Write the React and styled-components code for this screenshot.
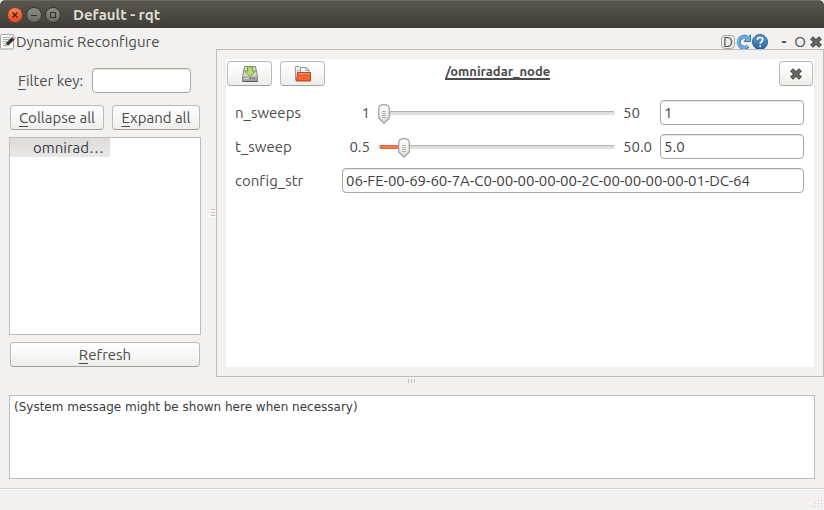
import React, { useState } from "react";
import styled, { createGlobalStyle } from "styled-components";

const GlobalStyle = createGlobalStyle`
  * { box-sizing: border-box; }
  body { margin: 0; background: #f2f1f0; }
  button, input, textarea { font: inherit; color: inherit; }
`;

const uiFont = `"Ubuntu", "Noto Sans", sans-serif`;

const thumb = `url("data:image/svg+xml,%3Csvg xmlns='http://www.w3.org/2000/svg' width='12' height='20'%3E%3Cdefs%3E%3ClinearGradient id='g' x2='0' y2='1'%3E%3Cstop stop-color='%23fff'/%3E%3Cstop offset='1' stop-color='%23dddcda'/%3E%3C/linearGradient%3E%3C/defs%3E%3Cpath d='M.7 5Q.7 .7 6 .7T11.3 5V14L6 19.2L.7 14Z' fill='url(%23g)' stroke='%23a09e9b' stroke-width='1.2'/%3E%3Cpath d='M4 7.5h4M4 9.5h4M4 11.5h4M4 13.5h4' stroke='%23b5b3b0'/%3E%3C/svg%3E")`;

const Window = styled.div`
  min-height: 100vh;
  display: flex;
  flex-direction: column;
  background: #f2f1f0;
  color: #4c4c4c;
  font: 15px/20px ${uiFont};
`;

const TitleBar = styled.header`
  height: 28px;
  flex: none;
  display: flex;
  align-items: center;
  gap: 3px;
  padding: 0 7px;
  border-radius: 5px 5px 0 0;
  border-top: 1px solid #6a675f;
  background: linear-gradient(#59564e, #3e3d38);
`;

const WindowTitle = styled.h1`
  margin: 0 0 0 9px;
  font: bold 15px/20px ${uiFont};
  color: #dfdbd2;
`;

const WindowButton = styled.button`
  width: 16px;
  height: 16px;
  padding: 0;
  border: 1px solid ${(p) => (p.$close ? "#8c3a20" : "#3a3934")};
  border-radius: 50%;
  background: ${(p) =>
    p.$close ? "linear-gradient(#f58360, #e6491b)" : "linear-gradient(#8f8c83, #6d6a62)"};
  svg { display: block; }
`;

const DockHeader = styled.div`
  height: 21px;
  flex: none;
  display: flex;
  align-items: center;
  padding-top: 6px;
`;

const DockTitle = styled.h2`
  margin: 0 auto 0 0;
  display: flex;
  align-items: center;
  font: 15px/20px ${uiFont};
  svg { flex: none; }
`;

const DockTools = styled.div`
  display: flex;
  align-items: center;
  margin-left: 8px;
`;

const DockButton = styled.button`
  height: 16px;
  width: 16px;
  padding: 0;
  border: 0;
  background: none;
  line-height: 16px;
  text-align: center;
  font-weight: ${(p) => (p.$strong ? 700 : 400)};
  svg { display: block; margin: 0 auto; }
`;

const OptionsButton = styled(DockButton)`
  height: 14px;
  width: 14px;
  margin-right: 1px;
  border: 1px solid #aaa7a3;
  border-radius: 4px;
  background: #eeeceb;
  font-size: 14px;
  line-height: 12px;
`;

const Workspace = styled.main`
  flex: 1;
  display: flex;
`;

const Sidebar = styled.aside`
  width: 210px;
  flex: none;
  display: flex;
  flex-direction: column;
  padding: 19px 9px 10px;
`;

const FilterRow = styled.div`
  display: flex;
  align-items: center;
  justify-content: space-between;
  padding: 0 10px 0 9px;
`;

const TextField = styled.input`
  display: block;
  width: 100%;
  min-width: 0;
  height: 25px;
  padding: 0 3px;
  border: 1px solid #a9a5a1;
  border-radius: 4px;
  background: #fff;
  color: #3c3c3c;
  outline: none;
  box-shadow: inset 0 1px 0 #e8e7e5;
`;

const FilterField = styled(TextField)`
  width: 99px;
`;

const ButtonRow = styled.div`
  display: flex;
  gap: 8px;
  margin: 12px 0 7px;
  padding: 0 1px;
`;

const PushButton = styled.button`
  height: 25px;
  flex: ${(p) => (p.$width ? "none" : "1")};
  width: ${(p) => (p.$width ? `${p.$width}px` : "auto")};
  padding: 0;
  display: flex;
  align-items: center;
  justify-content: center;
  border: 1px solid #bdbab7;
  border-bottom-color: #a3a09c;
  border-radius: 4px;
  background: linear-gradient(#fff, #f7f7f6 50%, #ededec);
  white-space: nowrap;
`;

const Mnemonic = styled.u`
  text-underline-offset: 3px;
  text-decoration-thickness: 1px;
  text-decoration-skip-ink: none;
`;

const NodeTree = styled.ul`
  flex: 1;
  min-height: 80px;
  margin: 0 0 7px;
  padding: 0;
  list-style: none;
  border: 1px solid #c0bdb9;
  background: #fff;
`;

const TreeItem = styled.li`
  width: 100px;
  height: 19px;
  padding-left: 23px;
  line-height: 19px;
  color: #3c3c3c;
  background: linear-gradient(#dcdbd9, #e9e8e7);
`;

const RefreshRow = styled.div`
  display: flex;
  padding: 0 1px;
`;

const Handle = styled.div`
  flex: none;
  display: flex;
  align-items: center;
  justify-content: center;
  ${(p) => (p.$vertical ? "width: 6px;" : "height: 8px;")}
`;

const ScrollFrame = styled.section`
  flex: 1;
  min-width: 0;
  display: flex;
  padding: 9px;
  border: 1px solid #c0bdb9;
`;

const NodePanel = styled.div`
  flex: 1;
  min-width: 0;
  padding: 2px 1px 20px;
  background: #fff;
`;

const NodeToolbar = styled.div`
  display: flex;
  align-items: center;
`;

const ToolGroup = styled.div`
  display: flex;
  gap: 8px;
`;

const Space = styled.span`
  flex: ${(p) => p.$grow};
`;

const NodeName = styled.h3`
  margin: 0 0 2px;
  font: bold 13px/13px ${uiFont};
  border-bottom: 2px solid #4c4c4c;
`;

const ParameterList = styled.div`
  display: flex;
  flex-direction: column;
  gap: 9px;
  padding: 14px 9px 0 8px;
`;

const ParameterRow = styled.div`
  display: flex;
  align-items: center;
`;

const Name = styled.label`
  width: 107px;
  flex: none;
  font-variant-ligatures: none;
`;

const Limit = styled.span`
  flex: none;
  width: ${(p) => (p.$lower ? 28 : 29)}px;
  display: flex;
  justify-content: ${(p) => (p.$lower ? "flex-end" : "flex-start")};
`;

const ValueBox = styled.div`
  flex: none;
  width: 144px;
  margin-left: 8px;
`;

const Slider = styled.input`
  flex: 1;
  min-width: 60px;
  height: 20px;
  margin: 0 8px;
  appearance: none;
  background: none;
  outline: none;

  &::-webkit-slider-runnable-track {
    height: 4px;
    border-radius: 2px;
    background:
      linear-gradient(#d9542a, #f47c50 1px, #f47c50 3px, #d9542a) 2px 0 / var(--fill) 4px no-repeat,
      linear-gradient(#b5b3b0 1px, #e0dfdd 1px);
  }
  &::-webkit-slider-thumb {
    appearance: none;
    width: 12px;
    height: 20px;
    margin-top: -7px;
    background: ${thumb} no-repeat;
  }
`;

const MessageArea = styled.textarea`
  display: block;
  height: 84px;
  flex: none;
  margin: 10px 9px 9px;
  padding: 4px;
  resize: none;
  outline: none;
  border: 1px solid #c0bdb9;
  background: #fff;
  color: #3c3c3c;
  font: 12px/14px "DejaVu Sans", sans-serif;
`;

const StatusBar = styled.footer`
  height: 22px;
  flex: none;
  display: flex;
  align-items: flex-end;
  justify-content: flex-end;
  border-top: 1px solid #d5d3d1;
  box-shadow: inset 0 1px 0 #fafafa;
`;

const EditIcon = () => (
  <svg width="16" height="16" viewBox="0 0 16 16">
    <rect x=".5" y=".5" width="13" height="14.500" rx="1" fill="#fafafa" stroke="#a3a3a1" />
    <path d="M3 3.500h7M3 5.500h6M3 7.500h4M3 9.500h2M3 11.500h2" stroke="#aaa" />
    <path d="M5 12.500l1-3.500 6.500-6.500 2.500 2.500-6.500 6.500z" fill="#333" />
    <path d="M5 12.500l1-3 2.200 2.200z" fill="#e9c88c" />
    <path d="M11.700 3.300l1.600-1.600 2.500 2.500-1.600 1.600z" fill="#d79bc9" />
  </svg>
);

const ReloadIcon = () => (
  <svg width="16" height="16" viewBox="0 0 16 16">
    <path d="M12 12.200A5.500 5.500 0 1 1 11 3.500" fill="none" stroke="#3c78b8" strokeWidth="4" />
    <path d="M14.500 .7V7.500H8z" fill="#75aee3" stroke="#3c78b8" strokeWidth="1" />
    <path d="M11.700 11.900A5.500 5.500 0 1 1 11.500 4.300" fill="none" stroke="#75aee3" strokeWidth="2.600" />
  </svg>
);

const HelpIcon = () => (
  <svg width="16" height="16" viewBox="0 0 16 16">
    <defs>
      <linearGradient id="help" x2="0" y2="1">
        <stop stopColor="#6aa0cf" />
        <stop offset="1" stopColor="#24609c" />
      </linearGradient>
    </defs>
    <circle cx="8" cy="8" r="7.500" fill="url(#help)" stroke="#285f98" />
    <path d="M5.500 5.800C5.500 2.800 10.700 2.800 10.700 5.800C10.700 7.800 8.200 7.700 8.200 10" fill="none" stroke="#fff" strokeWidth="1.600" />
    <circle cx="8.200" cy="12.300" r="1" fill="#fff" />
  </svg>
);

const CrossIcon = () => (
  <svg width="14" height="14" viewBox="0 0 14 14">
    <path d="M2.500 2.700l9 8.600M11.500 2.700l-9 8.600" stroke="#484846" strokeWidth="4.200" />
    <path d="M2.900 3.100l8.200 7.800M11.100 3.100l-8.200 7.800" stroke="#686866" strokeWidth="2.400" />
  </svg>
);

const SaveIcon = () => (
  <svg width="16" height="16" viewBox="0 0 16 16">
    <path d="M2.500 .5h11l2 10v5H.5v-5z" fill="#d4d4d2" stroke="#8a8a88" />
    <path d="M1 10.500h14v4.500H1z" fill="#a3a3a1" />
    <path d="M.5 15.500h15" stroke="#555" />
    <path d="M2 12.500h5" stroke="#ddd" />
    <path d="M8 12.500h6" stroke="#666" strokeDasharray="1 1" />
    <path d="M5.500 .7h5v4.300h3L8 10.700 2.500 5h3z" fill="#b0dc6c" stroke="#6ea42c" strokeWidth=".9" />
  </svg>
);

const FolderIcon = () => (
  <svg width="16" height="16" viewBox="0 0 16 16">
    <path d="M.5 14.500V.5h4l2 2" fill="#ededeb" stroke="#999" />
    <path d="M2.500 14V4.500h4" fill="none" stroke="#bbb" />
    <path d="M5.500 8V1.500h6l2.500 2.500v4z" fill="#fafaf9" stroke="#999" />
    <path d="M11 1.500V4.500h3" fill="none" stroke="#999" />
    <path d="M2.500 6.500h13v8.500H1.500z" fill="#ee6535" stroke="#bd4117" />
    <path d="M3 7.500h12" stroke="#f69a77" />
  </svg>
);

const GrabMarks = ({ vertical }) => (
  <svg width={vertical ? 6 : 8} height={vertical ? 8 : 6}>
    <path
      d={vertical ? "M1 .5h4M1 3.500h4M1 6.500h4" : "M.5 1v4M3.500 1v4M6.500 1v4"}
      stroke="#bcb9b6"
    />
    <path
      d={vertical ? "M1 1.500h4M1 4.500h4M1 7.500h4" : "M1.500 1v4M4.500 1v4M7.500 1v4"}
      stroke="#fff"
    />
  </svg>
);

const dots = [[9, 0], [6, 3], [9, 3], [3, 6], [6, 6], [9, 6], [0, 9], [3, 9], [6, 9], [9, 9]];

const SizeGrip = () => (
  <svg width="12" height="13">
    {dots.map(([x, y]) => (
      <g key={`${x}-${y}`}>
        <rect x={x + 1} y={y + 1} width="1" height="1" fill="#fff" />
        <rect x={x} y={y} width="1" height="1" fill="#d2d0cd" />
      </g>
    ))}
  </svg>
);

function NumberParameter({ name, min, max, step, digits, initial }) {
  const [value, setValue] = useState(initial);
  const share = (Number(value) - min) / (max - min);
  return (
    <ParameterRow>
      <Name htmlFor={name}>{name}</Name>
      <Limit $lower>{min.toFixed(digits)}</Limit>
      <Slider
        type="range"
        aria-label={`${name} slider`}
        min={min}
        max={max}
        step={step}
        value={value}
        onChange={(e) => setValue(Number(e.target.value).toFixed(digits))}
        style={{ "--fill": share > 0 ? `calc(${share * 100}% + 2px)` : "0px" }}
      />
      <Limit>{max.toFixed(digits)}</Limit>
      <ValueBox>
        <TextField id={name} value={value} onChange={(e) => setValue(e.target.value)} />
      </ValueBox>
    </ParameterRow>
  );
}

export default function App() {
  return (
    <Window>
      <GlobalStyle />
      <TitleBar>
        <WindowButton $close aria-label="Close">
          <svg width="14" height="14">
            <path d="M4.500 4.500l5 5M9.500 4.500l-5 5" stroke="#4b1d10" strokeWidth="1.300" />
          </svg>
        </WindowButton>
        <WindowButton aria-label="Minimize">
          <svg width="14" height="14">
            <path d="M4 7.500h6" stroke="#33322e" />
          </svg>
        </WindowButton>
        <WindowButton aria-label="Maximize">
          <svg width="14" height="14">
            <rect x="4.500" y="4.500" width="5" height="5" fill="none" stroke="#33322e" />
          </svg>
        </WindowButton>
        <WindowTitle>Default - rqt</WindowTitle>
      </TitleBar>

      <DockHeader>
        <DockTitle>
          <EditIcon />
          Dynamic Reconfigure
        </DockTitle>
        <DockTools>
          <OptionsButton aria-label="Dock options">D</OptionsButton>
          <DockButton aria-label="Reload"><ReloadIcon /></DockButton>
          <DockButton aria-label="Help"><HelpIcon /></DockButton>
        </DockTools>
        <DockTools>
          <DockButton $strong>-</DockButton>
          <DockButton>O</DockButton>
          <DockButton aria-label="Close plugin"><CrossIcon /></DockButton>
        </DockTools>
      </DockHeader>

      <Workspace>
        <Sidebar>
          <FilterRow>
            <label htmlFor="filter"><Mnemonic>F</Mnemonic>ilter key:</label>
            <FilterField id="filter" />
          </FilterRow>
          <ButtonRow>
            <PushButton $width={94}><span><Mnemonic>C</Mnemonic>ollapse all</span></PushButton>
            <PushButton><span><Mnemonic>E</Mnemonic>xpand all</span></PushButton>
          </ButtonRow>
          <NodeTree role="tree" aria-label="Nodes">
            <TreeItem role="treeitem" aria-selected="true">omnirad…</TreeItem>
          </NodeTree>
          <RefreshRow>
            <PushButton><span><Mnemonic>R</Mnemonic>efresh</span></PushButton>
          </RefreshRow>
        </Sidebar>
        <Handle $vertical><GrabMarks vertical /></Handle>
        <ScrollFrame>
          <NodePanel>
            <NodeToolbar>
              <ToolGroup>
                <PushButton $width={45} aria-label="Save parameters"><SaveIcon /></PushButton>
                <PushButton $width={45} aria-label="Load parameters"><FolderIcon /></PushButton>
              </ToolGroup>
              <Space $grow={10} />
              <NodeName>/omniradar_node</NodeName>
              <Space $grow={19} />
              <PushButton $width={34} aria-label="Close node"><CrossIcon /></PushButton>
            </NodeToolbar>
            <ParameterList>
              <NumberParameter name="n_sweeps" min={1} max={50} step={1} digits={0} initial="1" />
              <NumberParameter name="t_sweep" min={0.5} max={50} step={0.1} digits={1} initial="5.0" />
              <ParameterRow>
                <Name htmlFor="config_str">config_str</Name>
                <TextField
                  id="config_str"
                  defaultValue="06-FE-00-69-60-7A-C0-00-00-00-00-2C-00-00-00-00-01-DC-64"
                />
              </ParameterRow>
            </ParameterList>
          </NodePanel>
        </ScrollFrame>
      </Workspace>

      <Handle><GrabMarks /></Handle>
      <MessageArea
        aria-label="System messages"
        readOnly
        value="(System message might be shown here when necessary)"
      />
      <StatusBar><SizeGrip /></StatusBar>
    </Window>
  );
}
